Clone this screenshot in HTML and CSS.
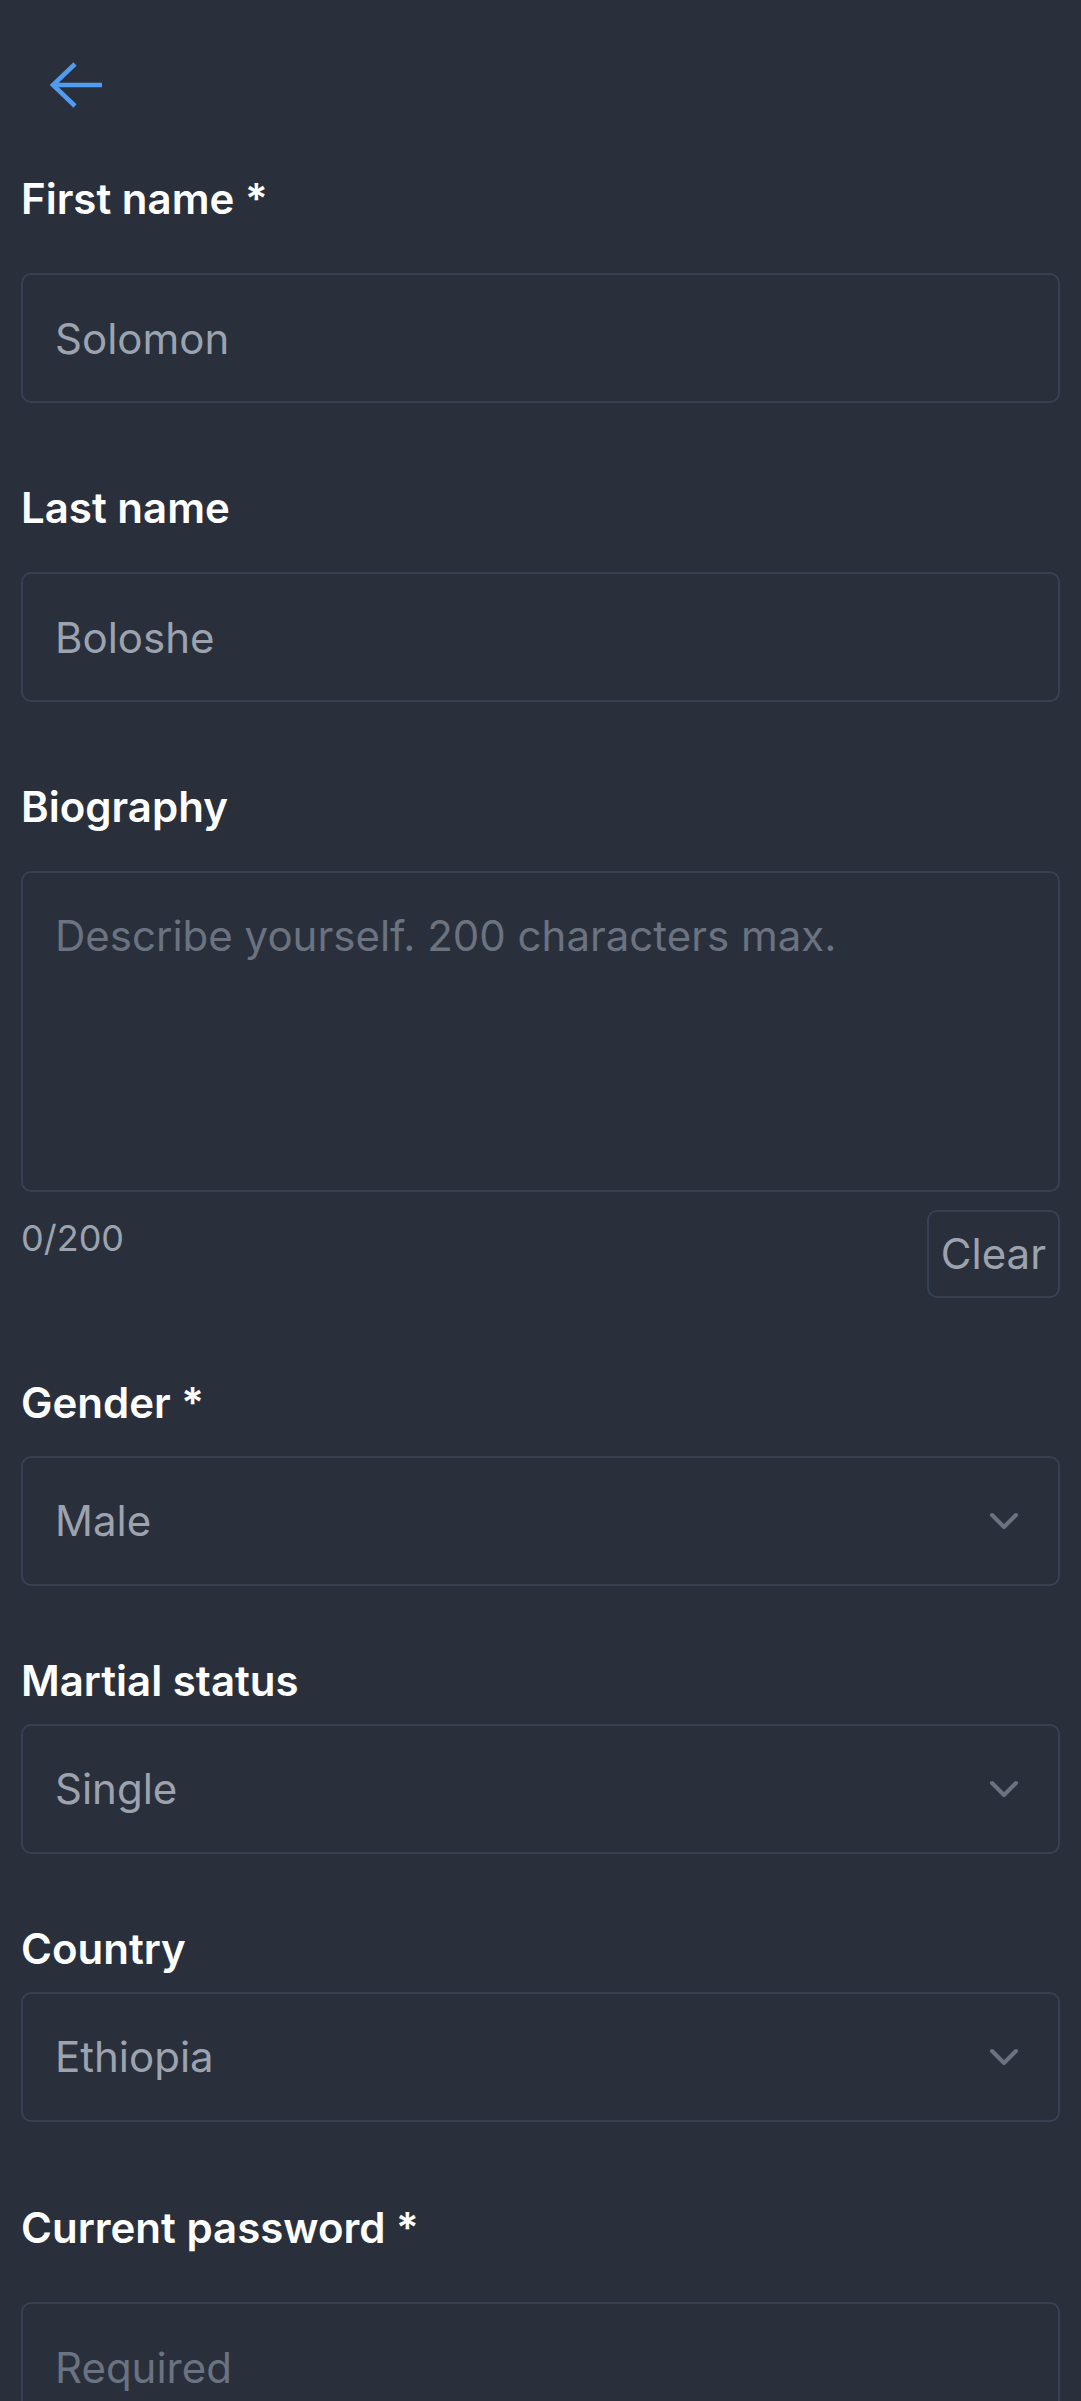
FILE: index.html
```html
<!DOCTYPE html>
<html lang="en">
<head>
<meta charset="utf-8">
<title>Edit profile</title>
<link rel="stylesheet" href="styles.css">
</head>
<body>
<div class="page">
  <header class="header">
    <button class="back" aria-label="Back">
      <svg class="back-icon" width="56" height="48" viewBox="0 0 56 48" fill="none" stroke="currentColor" stroke-width="4.5" stroke-linejoin="miter">
        <path d="M4 24 L53 24"/>
        <path d="M26 3 L4 24 L26 45"/>
      </svg>
    </button>
  </header>

  <form class="form">
    <div class="field">
      <label class="label label--req">First name *</label>
      <input class="input" type="text" value="Solomon">
    </div>

    <div class="field">
      <label class="label">Last name</label>
      <input class="input" type="text" value="Boloshe">
    </div>

    <div class="field">
      <label class="label">Biography</label>
      <textarea class="textarea" placeholder="Describe yourself. 200 characters max."></textarea>
      <div class="counter-row">
        <span class="counter">0/200</span>
        <button type="button" class="clear">Clear</button>
      </div>
    </div>

    <div class="field field--select field--after-row">
      <label class="label label--select label--req-select">Gender *</label>
      <div class="select">
        <span class="select-value">Male</span>
        <svg class="chevron" width="30" height="18" viewBox="0 0 30 18" fill="none" stroke="currentColor" stroke-width="4" stroke-linecap="round" stroke-linejoin="round"><path d="M3 3 L15 15 L27 3"/></svg>
      </div>
    </div>

    <div class="field field--select">
      <label class="label label--select">Martial status</label>
      <div class="select">
        <span class="select-value">Single</span>
        <svg class="chevron" width="30" height="18" viewBox="0 0 30 18" fill="none" stroke="currentColor" stroke-width="4" stroke-linecap="round" stroke-linejoin="round"><path d="M3 3 L15 15 L27 3"/></svg>
      </div>
    </div>

    <div class="field field--select">
      <label class="label label--select">Country</label>
      <div class="select">
        <span class="select-value">Ethiopia</span>
        <svg class="chevron" width="30" height="18" viewBox="0 0 30 18" fill="none" stroke="currentColor" stroke-width="4" stroke-linecap="round" stroke-linejoin="round"><path d="M3 3 L15 15 L27 3"/></svg>
      </div>
    </div>

    <div class="field field--after-select">
      <label class="label label--req">Current password *</label>
      <input class="input" type="password" placeholder="Required">
    </div>
  </form>
</div>
</body>
</html>
```

FILE: styles.css
```css
* {
  box-sizing: border-box;
}

html, body {
  margin: 0;
  padding: 0;
  background: #29303b;
}

body {
  font-family: Inter, "Noto Sans", "Liberation Sans", sans-serif;
  color: #ffffff;
  min-height: 2401px;
  overflow: hidden;
}

.page {
  padding: 0 21px;
}

.header {
  padding: 61px 0 0 28px;
  height: 109px;
}

.back {
  display: block;
  padding: 0;
  margin: 0;
  border: 0;
  background: transparent;
  color: #4f9cf0;
  width: 56px;
  height: 48px;
  cursor: pointer;
}

.back-icon {
  display: block;
}

.form {
  display: flex;
  flex-direction: column;
  padding-top: 65px;
}

.field {
  display: flex;
  flex-direction: column;
}

.field + .field {
  margin-top: 80px;
}

.field--select + .field--select {
  margin-top: 70px;
}

.field--after-row {
  margin-top: 81px;
}

.field--select + .field--after-select {
  margin-top: 81px;
}

.label {
  display: block;
  font-size: 42px;
  line-height: 50px;
  font-weight: 600;
  color: #ffffff;
  margin-bottom: 39px;
}

.label--req {
  margin-bottom: 49px;
}

.label--select {
  margin-bottom: 18px;
}

.label--req-select {
  margin-bottom: 28px;
}

.input,
.textarea,
.select {
  width: 100%;
  background: #29303b;
  border: 2px solid #374151;
  border-radius: 10px;
  font-family: Inter, "Noto Sans", "Liberation Sans", sans-serif;
  font-size: 42px;
  color: #9ca3af;
  outline: none;
  margin: 0;
}

.input {
  height: 130px;
  padding: 0 32px;
}

.input::placeholder,
.textarea::placeholder {
  color: #6b7280;
  opacity: 1;
}

.textarea {
  display: block;
  height: 321px;
  padding: 38px 32px;
  line-height: 50px;
  resize: none;
}

.counter-row {
  display: flex;
  justify-content: space-between;
  align-items: flex-start;
  margin-top: 18px;
}

.counter {
  font-size: 36px;
  line-height: 44px;
  color: #9ca3af;
  padding-top: 6px;
}

.clear {
  font-family: Inter, "Noto Sans", "Liberation Sans", sans-serif;
  font-size: 42px;
  line-height: 50px;
  color: #9ca3af;
  background: transparent;
  border: 2px solid #374151;
  border-radius: 10px;
  padding: 17px 12px;
  margin: 0;
}

.select {
  height: 130px;
  padding: 0 39px 0 32px;
  display: flex;
  align-items: center;
  justify-content: space-between;
}

.select-value {
  line-height: 50px;
}

.chevron {
  display: block;
  color: #6b7280;
}
```
